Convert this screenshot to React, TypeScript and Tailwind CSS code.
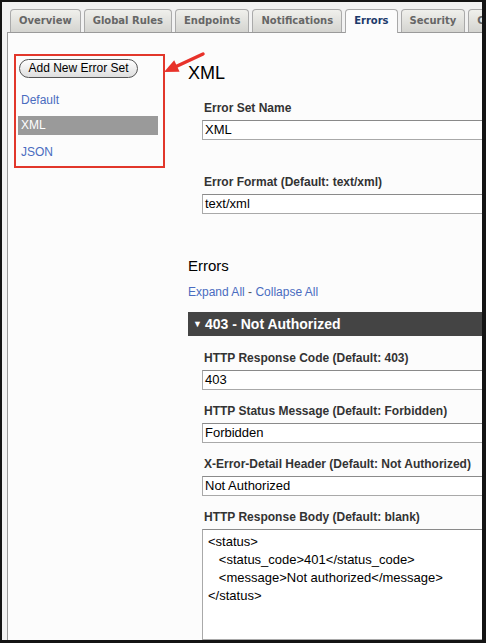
import React from "react";

const tabs = ["Overview", "Global Rules", "Endpoints", "Notifications", "Errors", "Security", "Caching"];

function Field({ label, value, first }: { label: string; value: string; first?: boolean }) {
  return (
    <div className={first ? "" : "mt-[14px]"}>
      <div className="ml-[2px] h-[14px] text-[12px] leading-[14px] font-bold text-[#333]">{label}</div>
      <div className="mt-[5px] h-[20px] w-[320px] border border-[#a9a9a9] border-t-[#8a8a8a] bg-white pl-[2px] text-[13px] leading-[18px] text-black">
        {value}
      </div>
    </div>
  );
}

export default function App() {
  return (
    <div className="w-[486px] h-[643px] bg-[#141414] pt-[2px] pl-[2px] pr-[4px] pb-[3px]" style={{ fontFamily: '"Liberation Sans", Arial, sans-serif' }}>
      <div className="relative w-full h-full bg-[#f2f2f2] overflow-hidden flex flex-col">
        {/* Tabs */}
        <div className="flex items-end gap-[3px] pl-[8px] pt-[7px] h-[30px] shrink-0 whitespace-nowrap" style={{ fontFamily: '"DejaVu Sans", Verdana, sans-serif' }}>
          {tabs.map((t) =>
            t === "Errors" ? (
              <div
                key={t}
                className="relative z-10 h-[24px] -mb-[1px] px-[8px] rounded-t-[4px] border border-b-0 border-[#a9a9a9] bg-[#fcfcfc] text-[10px] font-bold leading-[22px] text-[#1b3a6b]"
              >
                {t}
              </div>
            ) : (
              <div
                key={t}
                className="h-[23px] px-[8px] rounded-t-[4px] border border-b-0 border-[#aaaaaa] bg-gradient-to-b from-[#f0f0ec] to-[#d4d4d0] text-[10px] font-bold leading-[22px] text-[#666]"
              >
                {t}
              </div>
            )
          )}
        </div>

        {/* Panel */}
        <div className="relative flex-1 ml-[5px] border-l border-t border-[#9a9a9a] bg-[#fcfcfc] flex">
          {/* Left column */}
          <div className="w-[180px] shrink-0">
            <div className="ml-[6px] mt-[21px] w-[151px] h-[114px] border-2 border-[#e2372b]">
              <div className="ml-[3px] mt-[3px] w-[119px] h-[19px] rounded-full border border-[#555] bg-gradient-to-b from-white to-[#dedede] text-[12px] leading-[17px] text-black text-center">
                Add New Error Set
              </div>
              <div className="ml-[5px] mt-[15px] text-[12px] leading-[14px] text-[#4a6cc0]">Default</div>
              <div className="ml-[2px] mt-[9px] w-[140px] h-[19px] bg-[#9a9a9a] pl-[3px] text-[12px] leading-[19px] text-white">XML</div>
              <div className="ml-[5px] mt-[10px] text-[12px] leading-[14px] text-[#4a6cc0]">JSON</div>
            </div>
          </div>

          {/* Right column */}
          <div className="flex-1 whitespace-nowrap">
            <div className="mt-[29px] text-[18px] leading-[22px] text-black">XML</div>
            <div className="ml-[14px] mt-[17px]">
              <Field label="Error Set Name" value="XML" first />
              <div className="mt-[35px]">
                <Field label="Error Format (Default: text/xml)" value="text/xml" first />
              </div>
            </div>
            <div className="mt-[43px] text-[15px] leading-[18px] text-black">Errors</div>
            <div className="mt-[10px] text-[12px] leading-[14px] text-[#4a6cc0]">
              Expand All <span className="text-[#555]">-</span> Collapse All
            </div>
            <div className="mt-[13px] h-[24px] w-[320px] bg-[#444] flex items-center pl-[5px] gap-[3px] text-white">
              <span className="text-[9px] leading-none">▼</span>
              <span className="text-[14px] font-bold leading-[24px]">403 - Not Authorized</span>
            </div>
            <div className="ml-[14px] mt-[15px]">
              <Field label="HTTP Response Code (Default: 403)" value="403" first />
              <Field label="HTTP Status Message (Default: Forbidden)" value="Forbidden" />
              <Field label="X-Error-Detail Header (Default: Not Authorized)" value="Not Authorized" />
              <div className="mt-[14px]">
                <div className="ml-[2px] h-[14px] text-[12px] leading-[14px] font-bold text-[#333]">HTTP Response Body (Default: blank)</div>
                <div className="mt-[5px] h-[111px] w-[320px] border border-[#a9a9a9] border-t-[#8a8a8a] bg-white pl-[5px] pt-[3px] text-[13px] leading-[18px] text-black whitespace-pre">
                  {"<status>\n   <status_code>401</status_code>\n   <message>Not authorized</message>\n</status>"}
                </div>
              </div>
            </div>
          </div>

          {/* Red arrow annotation */}
          <svg className="absolute left-0 top-0 pointer-events-none" width="240" height="80" viewBox="0 0 240 80">
            <line x1="195" y1="21" x2="167" y2="34" stroke="#e8322a" strokeWidth="3.5" strokeLinecap="round" />
            <polygon points="156,39 166.2,27.2 171.6,38.8" fill="#e8322a" />
          </svg>
        </div>
      </div>
    </div>
  );
}
